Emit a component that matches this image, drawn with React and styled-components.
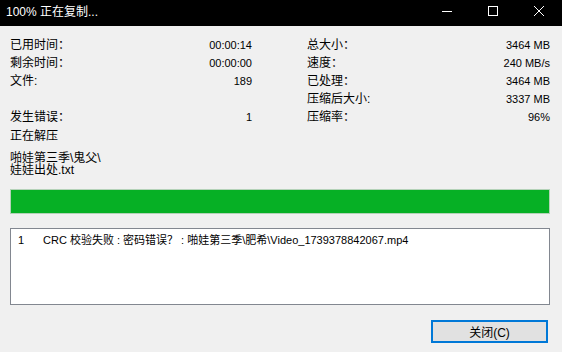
import React from "react";
import styled, { createGlobalStyle } from "styled-components";

const GlobalStyle = createGlobalStyle`
  html, body {
    margin: 0;
    padding: 0;
    background: #f0f0f0;
  }
  body {
    font-family: "Liberation Sans", "Noto Sans CJK SC", sans-serif;
    font-size: 12px;
    color: #000;
  }
`;

const leftRows = [
  { label: "已用时间：", value: "00:00:14" },
  { label: "剩余时间：", value: "00:00:00" },
  { label: "文件:", value: "189" },
  { label: "", value: "" },
  { label: "发生错误：", value: "1" },
];

const rightRows = [
  { label: "总大小：", value: "3464 MB" },
  { label: "速度：", value: "240 MB/s" },
  { label: "已处理：", value: "3464 MB" },
  { label: "压缩后大小:", value: "3337 MB" },
  { label: "压缩率：", value: "96%" },
];

const errors = [
  { id: 1, text: "CRC 校验失败 : 密码错误？ : 啪娃第三季\\肥希\\Video_1739378842067.mp4" },
];

const Window = styled.div`
  width: 562px;
  height: 352px;
  display: flex;
  flex-direction: column;
  background: #f0f0f0;
  overflow: hidden;
`;

const TitleBar = styled.div`
  height: 26px;
  flex-shrink: 0;
  background: #000;
  color: #fff;
  display: flex;
  align-items: flex-start;
`;

const Title = styled.div`
  flex: 1;
  padding-left: 6px;
  line-height: 24px;
  font-size: 12px;
`;

const Control = styled.div`
  width: 46px;
  height: 21px;
  display: flex;
  align-items: center;
  justify-content: center;
`;

const Content = styled.div`
  flex: 1;
  display: flex;
  flex-direction: column;
  padding: 10px 12px 0 10px;
`;

const Stats = styled.div`
  display: grid;
  grid-template-columns: 242px 243px;
  column-gap: 55px;
  align-items: start;
`;

const Column = styled.div`
  display: flex;
  flex-direction: column;
`;

const Row = styled.div`
  height: 18px;
  line-height: 18px;
  display: flex;
  justify-content: space-between;
  white-space: nowrap;
`;

const Value = styled.span`
  font-size: 11px;
`;

const Status = styled.div`
  margin-top: 1px;
  line-height: 18px;
`;

const Path = styled.div`
  margin-top: 7px;
  line-height: 12px;
`;

const Progress = styled.div`
  margin-top: 13px;
  height: 25px;
  box-sizing: border-box;
  border: 1px solid #b4d2b8;
  background: #e6e6e6;
`;

const Fill = styled.div`
  height: 100%;
  background: #06b025;
`;

const List = styled.div`
  margin-top: 14px;
  height: 77px;
  box-sizing: border-box;
  border: 1px solid #828790;
  background: #fff;
  padding-top: 4px;
  font-size: 11px;
`;

const ListRow = styled.div`
  display: flex;
  line-height: 14px;
  white-space: nowrap;
`;

const Num = styled.span`
  width: 32px;
  padding-left: 7px;
  box-sizing: border-box;
`;

const Footer = styled.div`
  margin-top: 15px;
  display: flex;
  justify-content: flex-end;
  padding-right: 2px;
`;

const Button = styled.button`
  width: 117px;
  height: 23px;
  box-sizing: border-box;
  border: 2px solid #0078d7;
  background: #e1e1e1;
  font: inherit;
  font-size: 12px;
  color: #000;
  padding: 0;
`;

const App = () => {
  return (
    <Window>
      <GlobalStyle />
      <TitleBar>
        <Title>100% 正在复制...</Title>
        <Control>
          <svg width="10" height="10" viewBox="0 0 10 10">
            <line x1="0" y1="5.5" x2="10" y2="5.5" stroke="#fff" strokeWidth="1" />
          </svg>
        </Control>
        <Control>
          <svg width="10" height="10" viewBox="0 0 10 10">
            <rect x="0.5" y="0.5" width="9" height="9" fill="none" stroke="#fff" strokeWidth="1" />
          </svg>
        </Control>
        <Control>
          <svg width="10" height="10" viewBox="0 0 10 10">
            <path d="M0 0 L10 10 M10 0 L0 10" stroke="#fff" strokeWidth="1" />
          </svg>
        </Control>
      </TitleBar>
      <Content>
        <Stats>
          <Column>
            {leftRows.map((r, i) => (
              <Row key={i}>
                <span>{r.label}</span>
                <Value>{r.value}</Value>
              </Row>
            ))}
            <Status>正在解压</Status>
            <Path>
              啪娃第三季\鬼父\
              <br />
              娃娃出处.txt
            </Path>
          </Column>
          <Column>
            {rightRows.map((r, i) => (
              <Row key={i}>
                <span>{r.label}</span>
                <Value>{r.value}</Value>
              </Row>
            ))}
          </Column>
        </Stats>
        <Progress>
          <Fill style={{ width: "100%" }} />
        </Progress>
        <List>
          {errors.map((e) => (
            <ListRow key={e.id}>
              <Num>{e.id}</Num>
              <span>{e.text}</span>
            </ListRow>
          ))}
        </List>
        <Footer>
          <Button>关闭(C)</Button>
        </Footer>
      </Content>
    </Window>
  );
};

export default App;
